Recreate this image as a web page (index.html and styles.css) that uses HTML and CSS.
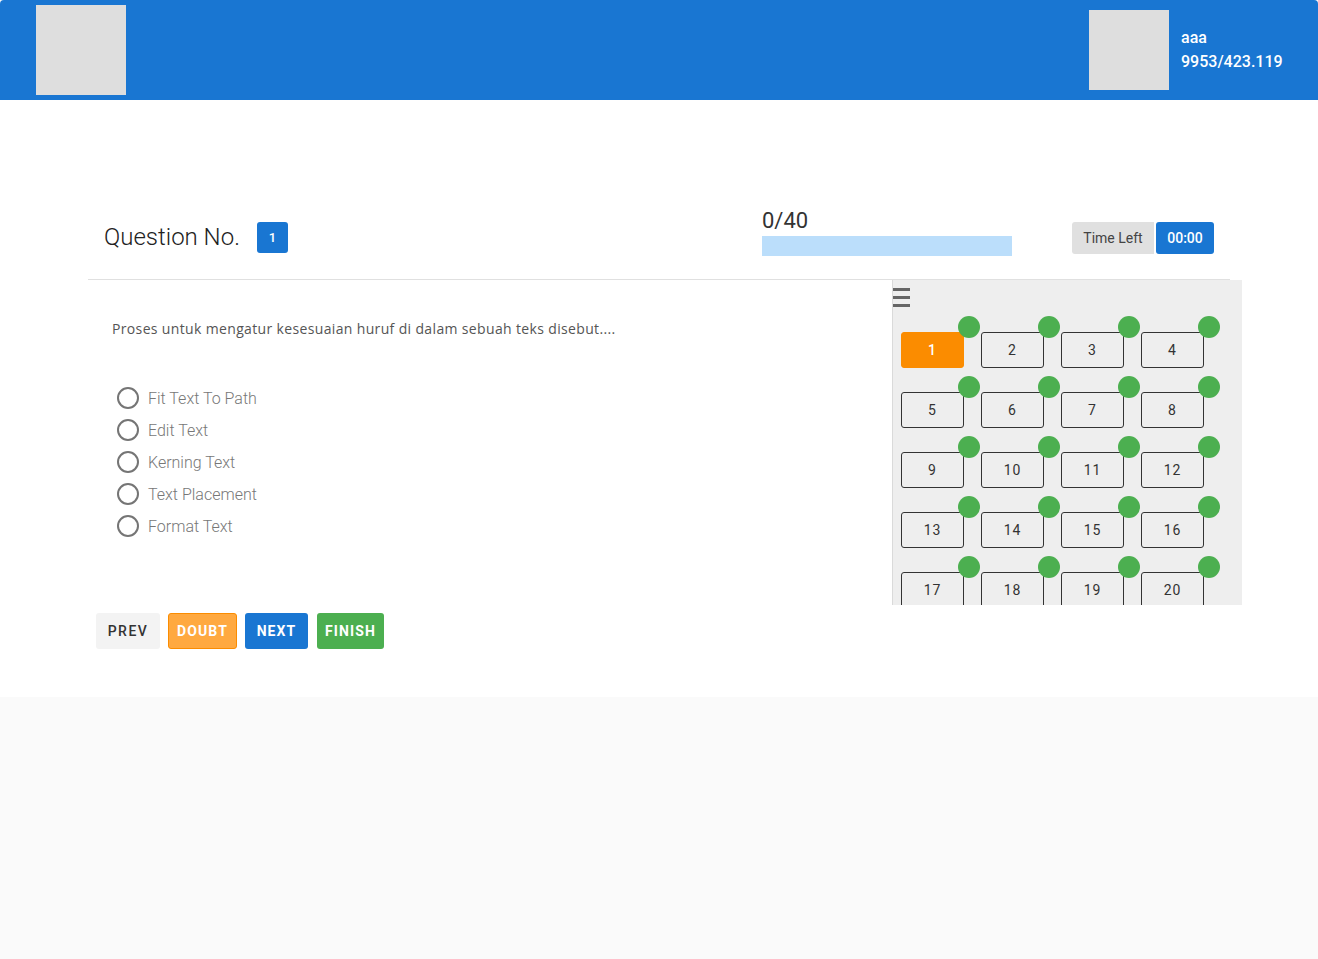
FILE: index.html
```html
<!DOCTYPE html>
<html>
<head>
<meta charset="utf-8">
<link rel="stylesheet" href="styles.css">
</head>
<body>
<header class="topbar">
  <div class="logo"></div>
  <div class="user">
    <div class="avatar"></div>
    <div class="user-info">
      <div class="user-name">aaa</div>
      <div class="user-id">9953/423.119</div>
    </div>
  </div>
</header>
<main class="main">
  <div class="top-row">
    <div class="qno">
      <span class="qno-label">Question No.</span>
      <span class="qno-badge">1</span>
    </div>
    <div class="progress">
      <div class="progress-label">0/40</div>
      <div class="progress-bar"></div>
    </div>
    <div class="timer">
      <span class="timer-label">Time Left</span>
      <span class="timer-value">00:00</span>
    </div>
  </div>
  <div class="body-row">
    <div class="question">
      <p class="question-text">Proses untuk mengatur kesesuaian huruf di dalam sebuah teks disebut....</p>
      <ul class="options">
        <li class="option"><span class="radio"></span>Fit Text To Path</li>
        <li class="option"><span class="radio"></span>Edit Text</li>
        <li class="option"><span class="radio"></span>Kerning Text</li>
        <li class="option"><span class="radio"></span>Text Placement</li>
        <li class="option"><span class="radio"></span>Format Text</li>
      </ul>
    </div>
    <aside class="panel">
      <div class="menu-icon"><span></span><span></span><span></span></div>
      <div class="grid">
        <div class="cell current">1<i class="dot"></i></div>
        <div class="cell">2<i class="dot"></i></div>
        <div class="cell">3<i class="dot"></i></div>
        <div class="cell">4<i class="dot"></i></div>
        <div class="cell">5<i class="dot"></i></div>
        <div class="cell">6<i class="dot"></i></div>
        <div class="cell">7<i class="dot"></i></div>
        <div class="cell">8<i class="dot"></i></div>
        <div class="cell">9<i class="dot"></i></div>
        <div class="cell">10<i class="dot"></i></div>
        <div class="cell">11<i class="dot"></i></div>
        <div class="cell">12<i class="dot"></i></div>
        <div class="cell">13<i class="dot"></i></div>
        <div class="cell">14<i class="dot"></i></div>
        <div class="cell">15<i class="dot"></i></div>
        <div class="cell">16<i class="dot"></i></div>
        <div class="cell">17<i class="dot"></i></div>
        <div class="cell">18<i class="dot"></i></div>
        <div class="cell">19<i class="dot"></i></div>
        <div class="cell">20<i class="dot"></i></div>
      </div>
    </aside>
  </div>
  <div class="actions">
    <button class="btn btn-prev">PREV</button>
    <button class="btn btn-doubt">DOUBT</button>
    <button class="btn btn-next">NEXT</button>
    <button class="btn btn-finish">FINISH</button>
  </div>
</main>
</body>
</html>
```

FILE: styles.css
```css
* { box-sizing: border-box; }
html, body { margin: 0; padding: 0; }
body {
  background: #fafafa;
  font-family: Roboto, "Liberation Sans", sans-serif;
  color: #333;
}
.topbar {
  height: 100px;
  background: #1976d2;
  border-top-left-radius: 4px;
  border-top-right-radius: 4px;
  display: flex;
  justify-content: space-between;
  align-items: flex-start;
  padding: 5px 36px 0 36px;
}
.logo { width: 90px; height: 90px; background: #dedede; }
.user { display: flex; align-items: flex-start; padding-top: 5px; }
.avatar { width: 80px; height: 80px; background: #dedede; }
.user-info {
  margin-left: 12px;
  width: 101px;
  color: #fff;
  font-size: 16px;
  font-weight: 500;
  line-height: 24px;
  padding-top: 16px;
}
.main {
  background: #fff;
  height: 597px;
  padding-top: 100px;
}
.top-row {
  margin: 0 88px;
  height: 80px;
  border-bottom: 1px solid #e0e0e0;
  display: flex;
  align-items: flex-start;
  padding: 0 16px;
}
.qno { display: flex; align-items: center; margin-top: 22px; width: 658px; }
.qno-label { font-size: 24px; font-weight: 300; color: #222; line-height: 31px; }
.qno-badge {
  margin-left: 17px;
  width: 31px; height: 31px;
  background: #1976d2;
  color: #fff;
  border-radius: 3px;
  font-size: 13px;
  font-weight: 500;
  display: flex; align-items: center; justify-content: center;
}
.progress { width: 250px; margin-top: 7px; }
.progress-label { font-size: 22px; color: #333; line-height: 28px; }
.progress-bar { height: 20px; background: #bbdefb; margin-top: 1px; }
.timer { margin-left: auto; margin-top: 22px; display: flex; }
.timer-label {
  background: #e0e0e0; color: #444;
  font-size: 14px; height: 32px; line-height: 32px;
  width: 82px; text-align: center;
  border-radius: 3px 0 0 3px;
}
.timer-value {
  margin-left: 2px;
  background: #1976d2; color: #fff;
  font-size: 14px; font-weight: 500; height: 32px; line-height: 32px;
  width: 58px; text-align: center;
  border-radius: 3px;
}
.body-row { display: flex; margin-left: 88px; height: 325px; }
.question { width: 804px; padding: 40px 0 0 24px; }
.question-text {
  margin: 0;
  font-family: "Open Sans", sans-serif;
  font-size: 14px;
  color: #555;
  line-height: 18px;
  letter-spacing: 0.35px;
}
.options { list-style: none; margin: 44px 0 0 5px; padding: 0; }
.option {
  display: flex; align-items: center;
  height: 32px;
  font-size: 16px; font-weight: 300; color: #777;
}
.radio {
  width: 22px; height: 22px;
  border: 2px solid #757575;
  border-radius: 50%;
  margin-right: 9px;
}
.panel {
  width: 350px;
  background: #eeeeee;
  border-left: 1px solid #dadada;
  overflow: hidden;
  padding: 8px 0 0 0;
}
.menu-icon { display: flex; flex-direction: column; gap: 5px; width: 17px; height: 20px; }
.menu-icon span { display: block; height: 3px; background: #666; }
.grid {
  display: grid;
  grid-template-columns: repeat(4, 63px);
  column-gap: 17px;
  row-gap: 24px;
  padding: 24px 0 0 8px;
}
.cell {
  position: relative;
  height: 36px;
  border: 1px solid #333;
  border-radius: 3px;
  display: flex; align-items: center; justify-content: center;
  font-size: 14px; color: #333; letter-spacing: 1px;
}
.cell.current { background: #fb8c00; border-color: #fb8c00; color: #fff; font-weight: 500; }
.dot {
  position: absolute;
  width: 22px; height: 22px;
  border-radius: 50%;
  background: #4caf50;
  top: -17px; right: -17px;
}
.actions { display: flex; gap: 8px; margin: 8px 0 0 96px; }
.btn {
  height: 36px;
  border: none;
  border-radius: 3px;
  font-family: Roboto, sans-serif;
  font-size: 14px;
  font-weight: 700;
  letter-spacing: 1.1px;
  padding: 0;
  text-align: center;
  color: #fff;
}
.btn-prev { background: #f3f3f3; color: #333; font-weight: 500; letter-spacing: 1.5px; width: 64px; }
.btn-doubt { background: #ffa940; border: 1px solid #fb8c00; width: 69px; }
.btn-next { background: #1976d2; width: 63px; }
.btn-finish { background: #4caf50; width: 67px; margin-left: 1px; }
```
